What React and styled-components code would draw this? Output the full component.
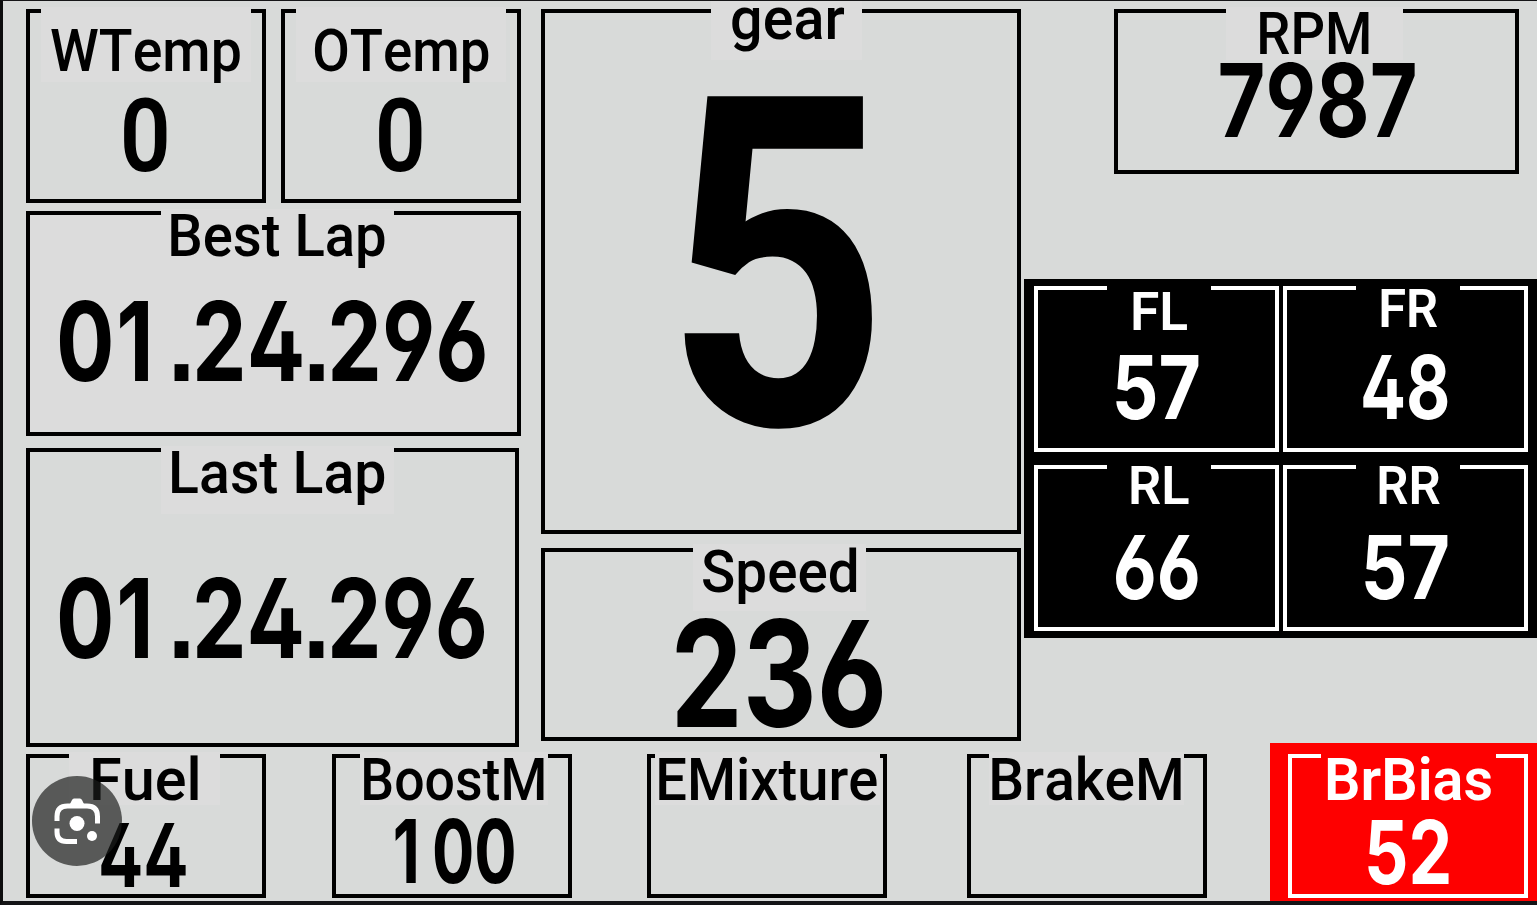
import React, { useLayoutEffect, useRef, useState } from "react";
import styled, { createGlobalStyle } from "styled-components";

const FACES = {
  label: { family: '"Roboto", "Liberation Sans", sans-serif', cap: 0.711, shift: 0.0137, features: "normal" },
  digits: {
    family: '"Inter", "Liberation Sans", sans-serif',
    cap: 0.727,
    shift: 0,
    features: '"cv02", "cv03", "cv04", "ss07"',
  },
};

const GlobalStyle = createGlobalStyle`
  * { box-sizing: border-box; }
  html, body { margin: 0; padding: 0; overflow: hidden; background: #d8dad9; }
`;

const Screen = styled.main`
  position: relative;
  width: 1537px;
  height: 905px;
  overflow: hidden;
  display: flex;
  flex-direction: column;
  background: #d8dad9;
  border-top: 1px solid #151517;
  border-left: 3px solid #0c0c0d;
  border-bottom: 4px solid #141416;
  color: #000;
`;

const Upper = styled.div`
  display: flex;
  align-items: flex-start;
  height: 753px;
  padding: 8px 0 0 23px;
`;

const LeftColumn = styled.div`
  width: 495px;
  display: flex;
  flex-direction: column;
`;

const TempRow = styled.div`
  display: flex;
  gap: 15px;
  margin-bottom: 8px;
`;

const LastLapSlot = styled.div`
  margin-top: 12px;
`;

const MiddleColumn = styled.div`
  width: 480px;
  margin-left: 20px;
  display: flex;
  flex-direction: column;
  gap: 14px;
`;

const RightColumn = styled.div`
  flex: 1;
  display: flex;
  flex-direction: column;
  align-items: flex-end;
`;

const RpmSlot = styled.div`
  margin-right: 18px;
`;

const TyreBoard = styled.div`
  width: 513px;
  height: 359px;
  margin-top: 105px;
  padding: 7px 9px 7px 10px;
  display: grid;
  grid-template-columns: 245px 245px;
  grid-template-rows: 166px 166px;
  gap: 13px 4px;
  background: #000;
  color: #fff;
`;

const BottomRow = styled.div`
  display: flex;
  align-items: flex-start;
  height: 147px;
  padding-left: 23px;
`;

const BottomSlot = styled.div`
  margin-left: ${(p) => p.$before}px;
`;

const BiasBlock = styled.div`
  width: 268px;
  height: 158px;
  margin: -11px 0 0 63px;
  padding: 11px 0 0 18px;
  background: #fe0000;
  color: #fff;
`;

const Frame = styled.section`
  width: ${(p) => p.$w}px;
  height: ${(p) => p.$h}px;
  border: 4px solid currentColor;
  background: ${(p) => p.$fill || "transparent"};
`;

const Caption = styled.header`
  width: ${(p) => p.$w}px;
  height: ${(p) => p.$h}px;
  margin-top: ${(p) => -4 - p.$lift}px;
  margin-left: ${(p) => p.$x - 4}px;
  padding-top: ${(p) => p.$padTop}px;
  padding-left: ${(p) => p.$padLeft}px;
  background: ${(p) => p.$fill};
`;

const Reading = styled.div`
  margin-top: ${(p) => p.$top}px;
  margin-left: ${(p) => p.$x - 4}px;
`;

const TextBox = styled.div`
  height: ${(p) => p.$cap}px;
  width: ${(p) => p.$w}px;
`;

const TextLine = styled.span`
  display: block;
  width: max-content;
  white-space: pre;
  font-family: ${(p) => p.$face.family};
  font-size: ${(p) => p.$cap / p.$face.cap}px;
  font-weight: ${(p) => p.$weight};
  font-feature-settings: ${(p) => p.$face.features};
  line-height: ${(p) => p.$cap}px;
  font-kerning: none;
  transform-origin: 0 50%;
`;

const One = styled.span`
  margin-left: ${(p) => (p.$first ? 0 : 0.02)}em;
  margin-right: 0.19em;
`;

const Point = styled.span`
  margin-left: -0.035em;
  margin-right: -0.045em;
`;

/* Evens out the cells of "1" and "." so times line up like an instrument readout. */
function spaced(text) {
  return text.split(/([1.])/).map((part, i) => {
    if (part === "1") return <One key={i} $first={i === 1 && text[0] === "1"}>1</One>;
    if (part === ".") return <Point key={i}>.</Point>;
    return part;
  });
}

/* Condenses a line so its drawn width is exactly `width`. */
function DinText({ children, width, cap, weight = 500, face = FACES.label }) {
  const line = useRef(null);
  const [transform, setTransform] = useState("none");
  useLayoutEffect(() => {
    const ctx = document.createElement("canvas").getContext("2d");
    const size = cap / face.cap;
    ctx.font = `${weight} ${size}px ${face.family}`;
    ctx.fontKerning = "none";
    const m = ctx.measureText(children);
    const bearingLeft = -m.actualBoundingBoxLeft;
    const bearingRight = m.width - m.actualBoundingBoxRight;
    const scale = width / (line.current.offsetWidth - bearingLeft - bearingRight);
    setTransform(
      `translate(${-bearingLeft * scale}px, ${size * face.shift}px) scaleX(${scale})`
    );
  }, [children, width, cap, weight, face]);
  return (
    <TextBox $w={width} $cap={cap}>
      <TextLine ref={line} $cap={cap} $weight={weight} $face={face} style={{ transform }}>
        {spaced(children)}
      </TextLine>
    </TextBox>
  );
}

/* Offsets inside a gauge are measured from the outer corner of its frame. */
function Gauge({ w, h, fill, label, tab, value, tabFill = "#dcdcdc" }) {
  return (
    <Frame $w={w} $h={h} $fill={fill}>
      <Caption
        $x={tab.x}
        $w={tab.w}
        $h={tab.h}
        $lift={tab.lift}
        $padTop={label.y + tab.lift}
        $padLeft={label.x - tab.x}
        $fill={tabFill}
      >
        <DinText width={label.w} cap={label.cap || 42} weight={label.weight}>
          {label.text}
        </DinText>
      </Caption>
      {value && (
        <Reading $x={value.x} $top={value.y - (tab.h - tab.lift)}>
          <DinText
            width={value.w}
            cap={value.cap}
            weight={value.weight || 650}
            face={value.face || FACES.digits}
          >
            {value.text}
          </DinText>
        </Reading>
      )}
    </Frame>
  );
}

const LensButton = styled.button`
  position: absolute;
  left: 29px;
  top: 775px;
  width: 90px;
  height: 90px;
  padding: 0;
  border: 0;
  border-radius: 50%;
  background: rgba(26, 28, 27, 0.68);
  display: flex;
  align-items: center;
  justify-content: center;
`;

function LensIcon() {
  return (
    <svg width="90" height="90" viewBox="0 0 90 90" fill="none">
      <path d="M25 45V40.500q0-10.500 10.500-10.500h19.500q10.500 0 10.500 10.500v7" stroke="#fff" strokeWidth="5" />
      <path d="M37.500 29l2.500-5q.7-1.500 2-1.500h6q1.300 0 2 1.500l2.500 5z" fill="#fff" />
      <path d="M25 52.500v3.500q0 9.500 9.500 9.500h10.500" stroke="#fff" strokeWidth="5" />
      <circle cx="45" cy="47.500" r="7.500" fill="#fff" />
      <circle cx="60" cy="60" r="5" fill="#fff" />
    </svg>
  );
}

const tyreTab = { x: 73, w: 104, h: 46, lift: 0 };
const tyres = [
  { label: { text: "FL", x: 99, y: 6, w: 54, cap: 38, weight: 600 }, value: { text: "57", x: 82, y: 69, w: 82, cap: 64, weight: 700 } },
  { label: { text: "FR", x: 98, y: 3, w: 56, cap: 38, weight: 600 }, value: { text: "48", x: 80, y: 69, w: 85, cap: 64, weight: 700 } },
  { label: { text: "RL", x: 97, y: 1, w: 58, cap: 38, weight: 600 }, value: { text: "66", x: 82, y: 70, w: 82, cap: 64, weight: 700 } },
  { label: { text: "RR", x: 96, y: 1, w: 61, cap: 38, weight: 600 }, value: { text: "57", x: 82, y: 70, w: 82, cap: 64, weight: 700 } },
];

export default function App() {
  return (
    <>
      <GlobalStyle />
      <Screen>
        <Upper>
          <LeftColumn>
            <TempRow>
              <Gauge w={240} h={194}
                tab={{ x: 14.500, w: 210, h: 75, lift: 2 }}
                label={{ text: "WTemp", x: 25, y: 20, w: 188.500 }}
                value={{ text: "0", x: 98, y: 90, w: 43, cap: 73, weight: 600, face: FACES.label }} />
              <Gauge w={240} h={194}
                tab={{ x: 14.500, w: 210, h: 75, lift: 2 }}
                label={{ text: "OTemp", x: 32.500, y: 20, w: 174.500 }}
                value={{ text: "0", x: 98, y: 90, w: 43, cap: 73, weight: 600, face: FACES.label }} />
            </TempRow>
            <Gauge w={495} h={225} fill="#dcdcdc"
              tab={{ x: 134.500, w: 233, h: 60, lift: 2 }}
              label={{ text: "Best Lap", x: 145, y: 3, w: 214 }}
              value={{ text: "01.24.296", x: 34, y: 89.500, w: 425, cap: 80 }} />
            <LastLapSlot>
              <Gauge w={493} h={299}
                tab={{ x: 134.500, w: 233, h: 68, lift: 2 }}
                label={{ text: "Last Lap", x: 146, y: 3, w: 212 }}
                value={{ text: "01.24.296", x: 33.500, y: 130, w: 424.500, cap: 80 }} />
            </LastLapSlot>
          </LeftColumn>
          <MiddleColumn>
            <Gauge w={480} h={525}
              tab={{ x: 170, w: 151, h: 64, lift: 13 }}
              label={{ text: "gear", x: 190.500, y: -12, w: 113 }}
              value={{ text: "5", x: 142, y: 88, w: 195, cap: 328, weight: 700, face: FACES.label }} />
            <Gauge w={480} h={193}
              tab={{ x: 152, w: 173, h: 67, lift: 4 }}
              label={{ text: "Speed", x: 161.500, y: 2, w: 154 }}
              value={{ text: "236", x: 135, y: 72, w: 206, cap: 107 }} />
          </MiddleColumn>
          <RightColumn>
            <RpmSlot>
              <Gauge w={405} h={165}
                tab={{ x: 112, w: 177, h: 53, lift: 2 }}
                label={{ text: "RPM", x: 146, y: 3, w: 109.500 }}
                value={{ text: "7987", x: 106, y: 54, w: 195, cap: 74 }} />
            </RpmSlot>
            <TyreBoard>
              {tyres.map((t) => (
                <Gauge key={t.label.text} w={245} h={166} tab={tyreTab} tabFill="#000" {...t} />
              ))}
            </TyreBoard>
          </RightColumn>
        </Upper>
        <BottomRow>
          <Gauge w={240} h={144}
            tab={{ x: 43, w: 150.500, h: 53, lift: 2 }}
            label={{ text: "Fuel", x: 67, y: 3.500, w: 105.500 }}
            value={{ text: "44", x: 75, y: 69, w: 85, cap: 64 }} />
          <BottomSlot $before={66}>
            <Gauge w={240} h={144}
              tab={{ x: 28.500, w: 187.500, h: 53, lift: 2 }}
              label={{ text: "BoostM", x: 32, y: 3.500, w: 180 }}
              value={{ text: "100", x: 63, y: 64.500, w: 119, cap: 64 }} />
          </BottomSlot>
          <BottomSlot $before={75}>
            <Gauge w={240} h={144}
              tab={{ x: 8, w: 225, h: 53, lift: 2 }}
              label={{ text: "EMixture", x: 12, y: 3.500, w: 218 }} />
          </BottomSlot>
          <BottomSlot $before={80}>
            <Gauge w={240} h={144}
              tab={{ x: 22.500, w: 195, h: 53, lift: 2 }}
              label={{ text: "BrakeM", x: 25.500, y: 3.500, w: 189 }} />
          </BottomSlot>
          <BiasBlock>
            <Gauge w={240} h={144} tabFill="#fe0000"
              tab={{ x: 33, w: 175.500, h: 53, lift: 2 }}
              label={{ text: "BrBias", x: 40, y: 3.500, w: 164, weight: 600 }}
              value={{ text: "52", x: 80.500, y: 66, w: 81, cap: 64 }} />
          </BiasBlock>
        </BottomRow>
        <LensButton aria-label="Search image">
          <LensIcon />
        </LensButton>
      </Screen>
    </>
  );
}
